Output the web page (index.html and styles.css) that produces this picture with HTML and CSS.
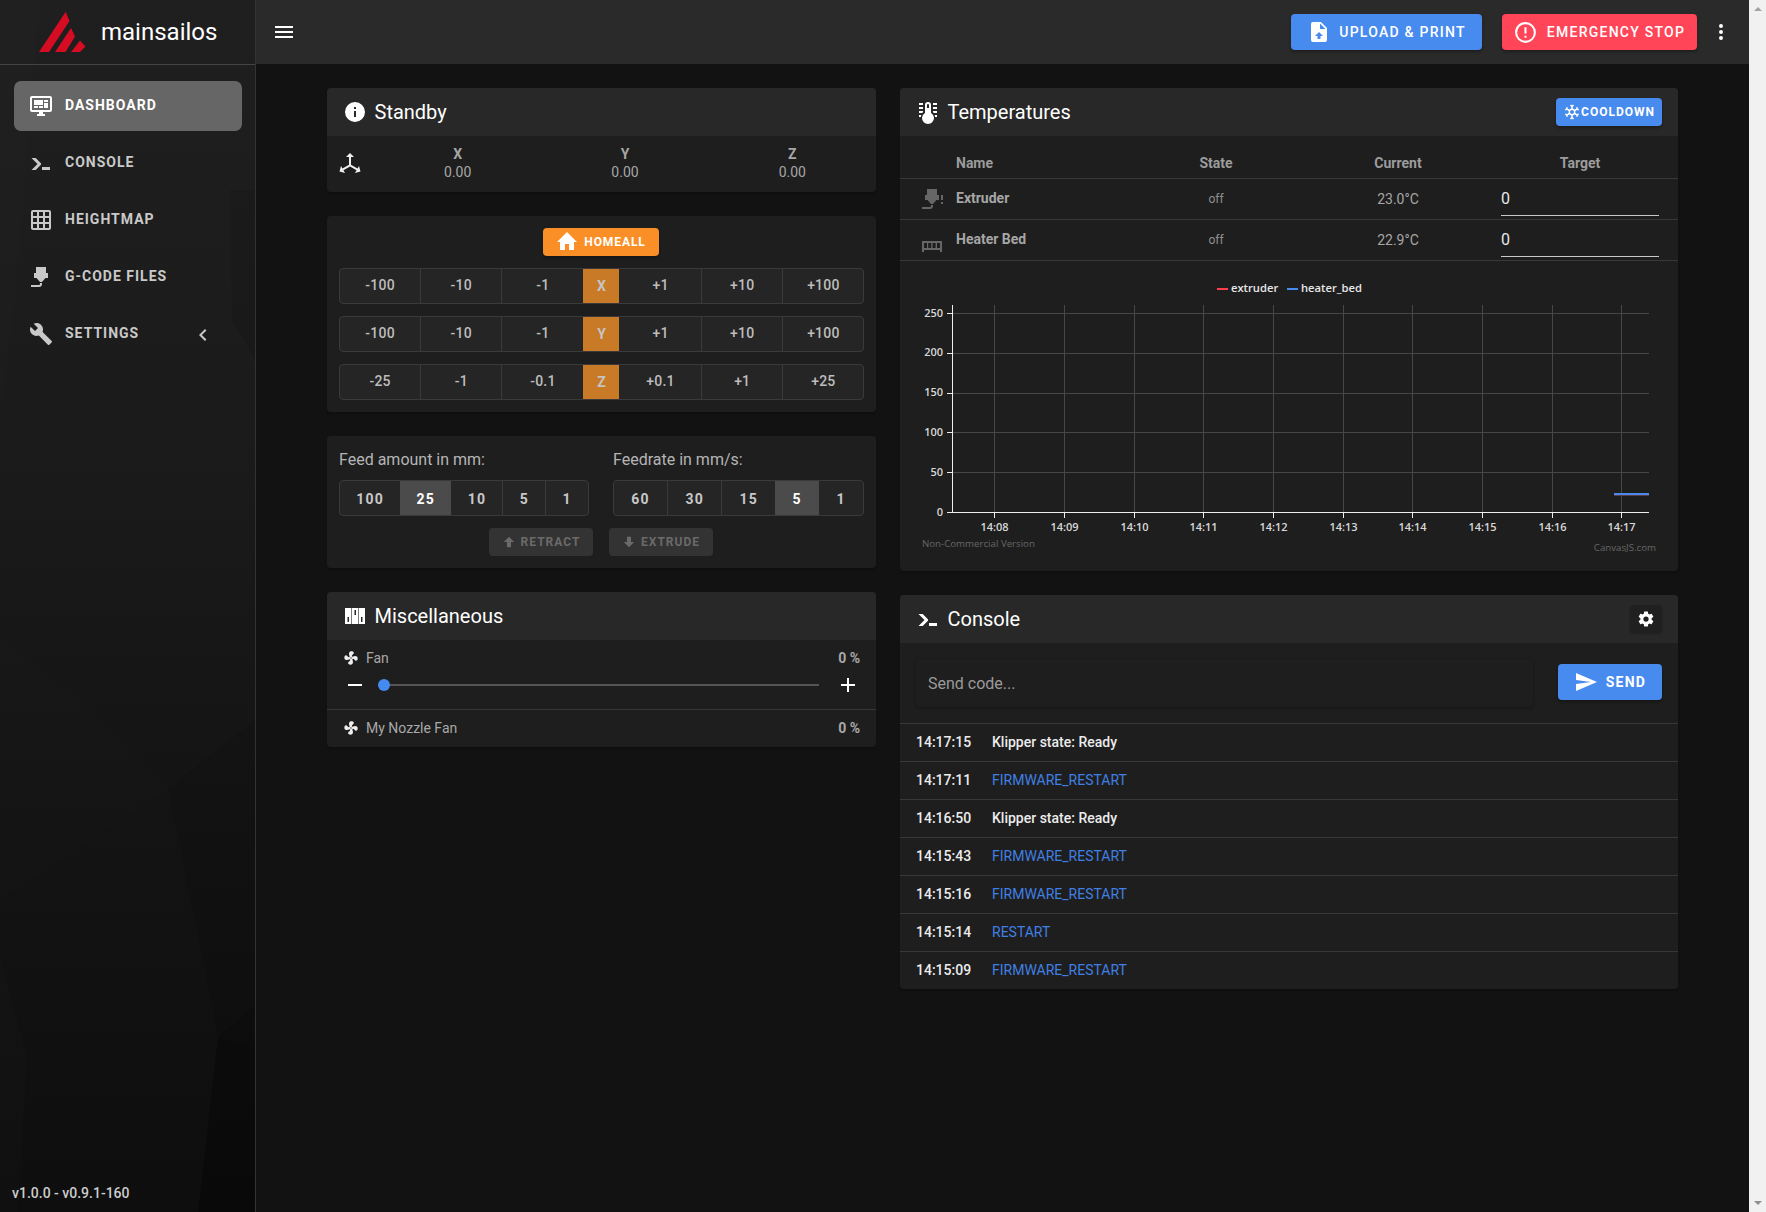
FILE: index.html
```html
<!DOCTYPE html>
<html lang="en">
<head>
<meta charset="utf-8">
<title>mainsailos</title>
<link rel="stylesheet" href="styles.css">
</head>
<body>
<svg class="sprite" aria-hidden="true">
  <symbol id="i-dash" viewBox="0 0 24 24"><path d="M21,16V4H3V16H21M21,2A2,2 0 0,1 23,4V16A2,2 0 0,1 21,18H14V20H16V22H8V20H10V18H3C1.89,18 1,17.1 1,16V4C1,2.89 1.89,2 3,2H21M5,6H14V11H5V6M15,6H19V8H15V6M19,9V14H15V9H19M5,12H9V14H5V12M10,12H14V14H10V12Z"/></symbol>
  <symbol id="i-console" viewBox="0 0 24 24"><path d="M13,19V16H21V19H13M8.5,13L2.47,7H6.71L11.67,11.95C12.25,12.54 12.25,13.5 11.67,14.07L6.74,19H2.5L8.5,13Z"/></symbol>
  <symbol id="i-grid" viewBox="0 0 24 24"><path d="M10,4V8H14V4H10M16,4V8H20V4H16M16,10V14H20V10H16M16,16V20H20V16H16M14,20V16H10V20H14M8,20V16H4V20H8M8,14V10H4V14H8M8,8V4H4V8H8M10,14H14V10H10V14M4,2H20A2,2 0 0,1 22,4V20A2,2 0 0,1 20,22H4C2.92,22 2,21.1 2,20V4A2,2 0 0,1 4,2Z"/></symbol>
  <symbol id="i-nozzle" viewBox="0 0 24 24"><path d="M7,2H17V8H19V13H16.5L13,17H11L7.5,13H5V8H7V2M10,22H2V20H10A1,1 0 0,0 11,19V18H13V19A3,3 0 0,1 10,22Z"/></symbol>
  <symbol id="i-nozzle-alert" viewBox="0 0 24 24"><path d="M7,2H17V8H19V13H16.5L13,17H11L7.5,13H5V8H7V2M10,22H2V20H10A1,1 0 0,0 11,19V18H13V19A3,3 0 0,1 10,22Z"/><path d="M21,8H23V13H21V8M21,15H23V17H21V15Z"/></symbol>
  <symbol id="i-wrench" viewBox="0 0 24 24"><path d="M22.7,19L13.6,9.9C14.5,7.6 14,4.9 12.1,3C10.1,1 7.1,0.6 4.7,1.7L9,6L6,9L1.6,4.7C0.4,7.1 0.9,10.1 2.9,12.1C4.8,14 7.5,14.5 9.8,13.6L18.9,22.7C19.3,23.1 19.9,23.1 20.3,22.7L22.6,20.4C23.1,20 23.1,19.3 22.7,19Z"/></symbol>
  <symbol id="i-chev" viewBox="0 0 24 24"><path d="M15.41,16.58L10.83,12L15.41,7.41L14,6L8,12L14,18L15.41,16.58Z"/></symbol>
  <symbol id="i-menu" viewBox="0 0 24 24"><path d="M3,6H21V8H3V6M3,11H21V13H3V11M3,16H21V18H3V16Z"/></symbol>
  <symbol id="i-upload" viewBox="0 0 24 24"><path d="M14,2H6A2,2 0 0,0 4,4V20A2,2 0 0,0 6,22H18A2,2 0 0,0 20,20V8L14,2M13.5,16V19H10.5V16H8L12.01,12L16,16H13.5M13,9V3.5L18.5,9H13Z"/></symbol>
  <symbol id="i-alert" viewBox="0 0 24 24"><path d="M11,15H13V17H11V15M11,7H13V13H11V7M12,2C6.47,2 2,6.5 2,12A10,10 0 0,0 12,22A10,10 0 0,0 22,12A10,10 0 0,0 12,2M12,20A8,8 0 0,1 4,12A8,8 0 0,1 12,4A8,8 0 0,1 20,12A8,8 0 0,1 12,20Z"/></symbol>
  <symbol id="i-dots" viewBox="0 0 24 24"><path d="M12,16A2,2 0 0,1 14,18A2,2 0 0,1 12,20A2,2 0 0,1 10,18A2,2 0 0,1 12,16M12,10A2,2 0 0,1 14,12A2,2 0 0,1 12,14A2,2 0 0,1 10,12A2,2 0 0,1 12,10M12,4A2,2 0 0,1 14,6A2,2 0 0,1 12,8A2,2 0 0,1 10,6A2,2 0 0,1 12,4Z"/></symbol>
  <symbol id="i-info" viewBox="0 0 24 24"><path d="M13,9H11V7H13M13,17H11V11H13M12,2A10,10 0 0,0 2,12A10,10 0 0,0 12,22A10,10 0 0,0 22,12A10,10 0 0,0 12,2Z"/></symbol>
  <symbol id="i-axis" viewBox="0 0 24 24"><path d="M12,2L16,6H13V13.85L19.53,17.61L21,15.03L22.5,20.5L17,21.96L18.53,19.35L12,15.58L5.47,19.35L7,21.96L1.5,20.5L3,15.03L4.47,17.61L11,13.85V6H8L12,2Z"/></symbol>
  <symbol id="i-home" viewBox="0 0 24 24"><path d="M10,20V14H14V20H19V12H22L12,2L2,12H5V20H10Z"/></symbol>
  <symbol id="i-up" viewBox="0 0 24 24"><path d="M15,20H9V12H4.16L12,4.16L19.84,12H15V20Z"/></symbol>
  <symbol id="i-down" viewBox="0 0 24 24"><path d="M9,4H15V12H19.84L12,19.84L4.16,12H9V4Z"/></symbol>
  <symbol id="i-dip" viewBox="0 0 24 24"><path fill-rule="evenodd" d="M2 4h6.4v16H2zM4.5 13v5H6v-5zM9 4h6v16H9zM11.5 6v5H13V6zM15.6 4H22v16h-6.4zM18 13v5h1.5v-5z"/></symbol>
  <symbol id="i-fan" viewBox="0 0 24 24"><path d="M12,11A1,1 0 0,0 11,12A1,1 0 0,0 12,13A1,1 0 0,0 13,12A1,1 0 0,0 12,11M12.5,2C17,2 17.11,5.57 14.75,6.75C13.76,7.24 13.32,8.29 13.13,9.22C13.61,9.42 14.03,9.73 14.35,10.13C18.05,8.13 22.03,8.92 22.03,12.5C22.03,17 18.46,17.1 17.28,14.73C16.78,13.74 15.72,13.3 14.79,13.11C14.59,13.59 14.28,14 13.88,14.34C15.87,18.03 15.08,22 11.5,22C7,22 6.91,18.42 9.27,17.24C10.25,16.75 10.69,15.71 10.89,14.79C10.4,14.59 9.97,14.27 9.65,13.87C5.96,15.85 2,15.07 2,11.5C2,7 5.56,6.89 6.74,9.26C7.24,10.25 8.29,10.68 9.22,10.87C9.41,10.39 9.73,9.97 10.14,9.65C8.15,5.96 8.94,2 12.5,2Z"/></symbol>
  <symbol id="i-thermo" viewBox="0 0 24 24"><path d="M17,3H21V5H17V3M17,7H21V9H17V7M17,11H21V13H17.75L17,12.1V11M21,15V17H19C19,16.31 18.9,15.63 18.71,15H21M7,3V5H3V3H7M7,7V9H3V7H7M7,11V12.1L6.25,13H3V11H7M3,15H5.29C5.1,15.63 5,16.31 5,17H3V15M15,13V5A3,3 0 0,0 12,2A3,3 0 0,0 9,5V13A6,6 0 0,0 6,18A6,6 0 0,0 12,24A6,6 0 0,0 18,18C18,16.17 16.79,14.33 15,13M12,4A1,1 0 0,1 13,5V8H11V5A1,1 0 0,1 12,4Z"/></symbol>
  <symbol id="i-bed" viewBox="0 0 24 24"><path fill-rule="evenodd" d="M2 8h20v11h-2v-2H4v2H2zM4 10v5h3v-5zM8.2 10v5h3v-5zM12.6 10v5h3v-5zM17 10v5h3v-5z"/></symbol>
  <symbol id="i-snow" viewBox="0 0 24 24"><path d="M20.79,13.95L18.46,14.57L16.46,13.44V10.56L18.46,9.43L20.79,10.05L21.31,8.12L19.54,7.65L20,5.88L18.07,5.36L17.45,7.69L15.45,8.82L13,7.38V5.12L14.71,3.41L13.29,2L12,3.29L10.71,2L9.29,3.41L11,5.12V7.38L8.5,8.82L6.5,7.69L5.92,5.36L4,5.88L4.47,7.65L2.7,8.12L3.22,10.05L5.55,9.43L7.55,10.56V13.45L5.55,14.58L3.22,13.96L2.7,15.89L4.47,16.36L4,18.12L5.93,18.64L6.55,16.31L8.55,15.18L11,16.62V18.88L9.29,20.59L10.71,22L12,20.71L13.29,22L14.7,20.59L13,18.88V16.62L15.5,15.17L17.5,16.3L18.12,18.63L20,18.12L19.53,16.35L21.3,15.88L20.79,13.95M9.5,10.56L12,9.11L14.5,10.56V13.44L12,14.89L9.5,13.44V10.56Z"/></symbol>
  <symbol id="i-cog" viewBox="0 0 24 24"><path d="M12,15.5A3.5,3.5 0 0,1 8.5,12A3.5,3.5 0 0,1 12,8.5A3.5,3.5 0 0,1 15.5,12A3.5,3.5 0 0,1 12,15.5M19.43,12.97C19.47,12.65 19.5,12.33 19.5,12C19.5,11.67 19.47,11.34 19.43,11L21.54,9.37C21.73,9.22 21.78,8.95 21.66,8.73L19.66,5.27C19.54,5.05 19.27,4.96 19.05,5.05L16.56,6.05C16.04,5.66 15.5,5.32 14.87,5.07L14.5,2.42C14.46,2.18 14.25,2 14,2H10C9.75,2 9.54,2.18 9.5,2.42L9.13,5.07C8.5,5.32 7.96,5.66 7.44,6.05L4.95,5.05C4.73,4.96 4.46,5.05 4.34,5.27L2.34,8.73C2.21,8.95 2.27,9.22 2.46,9.37L4.57,11C4.53,11.34 4.5,11.67 4.5,12C4.5,12.33 4.53,12.65 4.57,12.97L2.46,14.63C2.27,14.78 2.21,15.05 2.34,15.27L4.34,18.73C4.46,18.95 4.73,19.03 4.95,18.95L7.44,17.94C7.96,18.34 8.5,18.68 9.13,18.93L9.5,21.58C9.54,21.82 9.75,22 10,22H14C14.25,22 14.46,21.82 14.5,21.58L14.87,18.93C15.5,18.67 16.04,18.34 16.56,17.94L19.05,18.95C19.27,19.03 19.54,18.95 19.66,18.73L21.66,15.27C21.78,15.05 21.73,14.78 21.54,14.63L19.43,12.97Z"/></symbol>
  <symbol id="i-send" viewBox="0 0 24 24"><path d="M2,21L23,12L2,3V10L17,12L2,14V21Z"/></symbol>
  <symbol id="i-minus" viewBox="0 0 24 24"><path d="M19,13H5V11H19V13Z"/></symbol>
  <symbol id="i-plus" viewBox="0 0 24 24"><path d="M19,13H13V19H11V13H5V11H11V5H13V11H19V13Z"/></symbol>
</svg>

<div class="app">
  <aside class="sidebar">
    <svg class="side-bg" viewBox="0 0 255 1212" preserveAspectRatio="none" aria-hidden="true">
      <polygon points="0,0 40,0 15,300 0,420" fill="#fff" opacity="0.008"/>
      <polygon points="255,190 230,190 232,320 255,360" fill="#000" opacity="0.08"/>
      <polygon points="0,900 168,788 80,700 0,640" fill="#fff" opacity="0.008"/>
      <polygon points="255,720 168,788 218,1037 255,1005" fill="#000" opacity="0.08"/>
      <polygon points="218,1037 255,1005 255,1050" fill="#000" opacity="0.2"/>
      <polygon points="218,1037 255,1050 255,1212 198,1212" fill="#000" opacity="0.3"/>
      <polygon points="0,955 27,1058 18,1212 0,1212" fill="#fff" opacity="0.01"/>
    </svg>
    <div class="brand">
      <svg class="brand-logo" viewBox="0 0 47 41" aria-hidden="true">
        <polygon points="0,41 26.7,0.7 30.5,10 10,41"/>
        <polygon points="16,41 32,17 36,25.5 26.5,41"/>
        <polygon points="32,41 41,29.5 46.5,35.5 41,41"/>
      </svg>
      <span class="brand-name">mainsailos</span>
    </div>
    <nav class="nav">
      <a class="nav-item nav-active"><svg class="ico"><use href="#i-dash"/></svg><span>Dashboard</span></a>
      <a class="nav-item"><svg class="ico"><use href="#i-console"/></svg><span>Console</span></a>
      <a class="nav-item"><svg class="ico"><use href="#i-grid"/></svg><span>Heightmap</span></a>
      <a class="nav-item"><svg class="ico"><use href="#i-nozzle"/></svg><span>G-Code Files</span></a>
      <a class="nav-item"><svg class="ico"><use href="#i-wrench"/></svg><span class="nav-grow">Settings</span><svg class="ico nav-chev"><use href="#i-chev"/></svg></a>
    </nav>
    <div class="version">v1.0.0 - v0.9.1-160</div>
  </aside>

  <div class="main">
    <header class="topbar">
      <svg class="ico top-menu"><use href="#i-menu"/></svg>
      <div class="top-space"></div>
      <a class="btn btn-top btn-blue btn-upload"><svg class="ico"><use href="#i-upload"/></svg><span>Upload &amp; Print</span></a>
      <a class="btn btn-top btn-red btn-stop"><svg class="ico"><use href="#i-alert"/></svg><span>Emergency Stop</span></a>
      <svg class="ico top-dots"><use href="#i-dots"/></svg>
    </header>

    <main class="content">
      <div class="column">
        <section class="card">
          <div class="card-head"><svg class="ico"><use href="#i-info"/></svg><h2>Standby</h2></div>
          <div class="pos">
            <svg class="ico pos-icon"><use href="#i-axis"/></svg>
            <div class="pos-col"><strong>X</strong><span>0.00</span></div>
            <div class="pos-col"><strong>Y</strong><span>0.00</span></div>
            <div class="pos-col"><strong>Z</strong><span>0.00</span></div>
          </div>
        </section>

        <section class="card jog">
          <div class="jog-home"><a class="btn btn-orange btn-home"><svg class="ico"><use href="#i-home"/></svg><span>Homeall</span></a></div>
          <div class="jog-row"><a class="jog-cell">-100</a><a class="jog-cell">-10</a><a class="jog-cell">-1</a><a class="jog-axis">X</a><a class="jog-cell">+1</a><a class="jog-cell">+10</a><a class="jog-cell">+100</a></div>
          <div class="jog-row"><a class="jog-cell">-100</a><a class="jog-cell">-10</a><a class="jog-cell">-1</a><a class="jog-axis">Y</a><a class="jog-cell">+1</a><a class="jog-cell">+10</a><a class="jog-cell">+100</a></div>
          <div class="jog-row"><a class="jog-cell">-25</a><a class="jog-cell">-1</a><a class="jog-cell">-0.1</a><a class="jog-axis">Z</a><a class="jog-cell">+0.1</a><a class="jog-cell">+1</a><a class="jog-cell">+25</a></div>
        </section>

        <section class="card feed">
          <div class="feed-grid">
            <div>
              <div class="feed-label">Feed amount in mm:</div>
              <div class="seg"><a>100</a><a class="seg-on">25</a><a>10</a><a>5</a><a>1</a></div>
            </div>
            <div>
              <div class="feed-label">Feedrate in mm/s:</div>
              <div class="seg"><a>60</a><a>30</a><a>15</a><a class="seg-on">5</a><a>1</a></div>
            </div>
          </div>
          <div class="feed-actions">
            <a class="btn btn-off"><svg class="ico"><use href="#i-up"/></svg><span>Retract</span></a>
            <a class="btn btn-off"><svg class="ico"><use href="#i-down"/></svg><span>Extrude</span></a>
          </div>
        </section>

        <section class="card">
          <div class="card-head"><svg class="ico"><use href="#i-dip"/></svg><h2>Miscellaneous</h2></div>
          <div class="fan fan-slider">
            <div class="fan-line"><svg class="ico"><use href="#i-fan"/></svg><span class="fan-name">Fan</span><span class="fan-val">0 %</span></div>
            <div class="slider-line">
              <svg class="ico"><use href="#i-minus"/></svg>
              <div class="slider"><span class="slider-thumb"></span></div>
              <svg class="ico"><use href="#i-plus"/></svg>
            </div>
          </div>
          <div class="fan fan-plain">
            <div class="fan-line"><svg class="ico"><use href="#i-fan"/></svg><span class="fan-name">My Nozzle Fan</span><span class="fan-val">0 %</span></div>
          </div>
        </section>
      </div>

      <div class="column">
        <section class="card">
          <div class="card-head"><svg class="ico"><use href="#i-thermo"/></svg><h2>Temperatures</h2>
            <a class="btn btn-blue btn-cool"><svg class="ico"><use href="#i-snow"/></svg><span>Cooldown</span></a>
          </div>
          <div class="temp-row temp-top">
            <span></span><span class="temp-name">Name</span><span class="temp-c">State</span><span class="temp-c">Current</span><span class="temp-c">Target</span>
          </div>
          <div class="temp-row">
            <svg class="ico temp-ico"><use href="#i-nozzle-alert"/></svg><span class="temp-name">Extruder</span><span class="temp-c temp-state">off</span><span class="temp-c temp-cur">23.0°C</span><span class="temp-input">0</span>
          </div>
          <div class="temp-row">
            <svg class="ico temp-ico temp-ico-bed"><use href="#i-bed"/></svg><span class="temp-name">Heater Bed</span><span class="temp-c temp-state">off</span><span class="temp-c temp-cur">22.9°C</span><span class="temp-input">0</span>
          </div>
          <svg class="chart" viewBox="0 0 778 310" width="778" height="310" role="img" aria-label="Temperature chart">
            <g class="c-grid">
              <line x1="52" x2="749" y1="52.5" y2="52.5"/><line x1="52" x2="749" y1="92.5" y2="92.5"/><line x1="52" x2="749" y1="132.5" y2="132.5"/><line x1="52" x2="749" y1="171.5" y2="171.5"/><line x1="52" x2="749" y1="211.5" y2="211.5"/>
              <line x1="94.5" x2="94.5" y1="44" y2="251"/><line x1="164.5" x2="164.5" y1="44" y2="251"/><line x1="234.5" x2="234.5" y1="44" y2="251"/><line x1="303.5" x2="303.5" y1="44" y2="251"/><line x1="373.5" x2="373.5" y1="44" y2="251"/><line x1="443.5" x2="443.5" y1="44" y2="251"/><line x1="512.5" x2="512.5" y1="44" y2="251"/><line x1="582.5" x2="582.5" y1="44" y2="251"/><line x1="652.5" x2="652.5" y1="44" y2="251"/><line x1="721.5" x2="721.5" y1="44" y2="251"/>
            </g>
            <g class="c-axis">
              <line x1="52.5" x2="52.5" y1="44" y2="252"/><line x1="47" x2="749" y1="251.5" y2="251.5"/>
              <line x1="47" x2="52" y1="52.5" y2="52.5"/><line x1="47" x2="52" y1="92.5" y2="92.5"/><line x1="47" x2="52" y1="132.5" y2="132.5"/><line x1="47" x2="52" y1="171.5" y2="171.5"/><line x1="47" x2="52" y1="211.5" y2="211.5"/>
              <line x1="94.5" x2="94.5" y1="251" y2="257"/><line x1="164.5" x2="164.5" y1="251" y2="257"/><line x1="234.5" x2="234.5" y1="251" y2="257"/><line x1="303.5" x2="303.5" y1="251" y2="257"/><line x1="373.5" x2="373.5" y1="251" y2="257"/><line x1="443.5" x2="443.5" y1="251" y2="257"/><line x1="512.5" x2="512.5" y1="251" y2="257"/><line x1="582.5" x2="582.5" y1="251" y2="257"/><line x1="652.5" x2="652.5" y1="251" y2="257"/><line x1="721.5" x2="721.5" y1="251" y2="257"/>
            </g>
            <g class="c-y">
              <text x="43" y="56">250</text><text x="43" y="95">200</text><text x="43" y="135">150</text><text x="43" y="175">100</text><text x="43" y="215">50</text><text x="43" y="255">0</text>
            </g>
            <g class="c-x">
              <text x="94.5" y="270">14:08</text><text x="164.5" y="270">14:09</text><text x="234.5" y="270">14:10</text><text x="303.5" y="270">14:11</text><text x="373.5" y="270">14:12</text><text x="443.5" y="270">14:13</text><text x="512.5" y="270">14:14</text><text x="582.5" y="270">14:15</text><text x="652.5" y="270">14:16</text><text x="721.5" y="270">14:17</text>
            </g>
            <line class="c-red" x1="317" x2="328" y1="28" y2="28"/>
            <text class="c-leg" x="331" y="31">extruder</text>
            <line class="c-blue" x1="387" x2="398" y1="28" y2="28"/>
            <text class="c-leg" x="401" y="31">heater_bed</text>
            <line class="c-under" x1="714" x2="749" y1="234.5" y2="234.5"/>
            <line class="c-blue" x1="714" x2="749" y1="233" y2="233"/>
            <text class="c-credit" x="22" y="286">Non-Commercial Version</text>
            <text class="c-credit c-credit-end" x="756" y="290">CanvasJS.com</text>
          </svg>
        </section>

        <section class="card">
          <div class="card-head"><svg class="ico"><use href="#i-console"/></svg><h2>Console</h2>
            <a class="btn btn-gear"><svg class="ico"><use href="#i-cog"/></svg></a>
          </div>
          <div class="send-row">
            <div class="send-input">Send code...</div>
            <a class="btn btn-blue btn-send"><svg class="ico"><use href="#i-send"/></svg><span>Send</span></a>
          </div>
          <div class="log"><span class="log-time">14:17:15</span><span class="log-msg">Klipper state: Ready</span></div>
          <div class="log"><span class="log-time">14:17:11</span><span class="log-cmd">FIRMWARE_RESTART</span></div>
          <div class="log"><span class="log-time">14:16:50</span><span class="log-msg">Klipper state: Ready</span></div>
          <div class="log"><span class="log-time">14:15:43</span><span class="log-cmd">FIRMWARE_RESTART</span></div>
          <div class="log"><span class="log-time">14:15:16</span><span class="log-cmd">FIRMWARE_RESTART</span></div>
          <div class="log"><span class="log-time">14:15:14</span><span class="log-cmd">RESTART</span></div>
          <div class="log"><span class="log-time">14:15:09</span><span class="log-cmd">FIRMWARE_RESTART</span></div>
        </section>
      </div>
    </main>
  </div>

  <div class="scrollbar"><span class="arrow-up"></span><span class="arrow-down"></span></div>
</div>
</body>
</html>
```
FILE: styles.css
```css
* { box-sizing: border-box; }
html, body { margin: 0; height: 100%; overflow: hidden; }
body { background: #121212; color: #fff; font-family: Roboto, "Liberation Sans", sans-serif; font-size: 14px; }
h2 { margin: 0; font-size: 20px; font-weight: 400; line-height: 24px; }
a { color: inherit; text-decoration: none; }

.sprite { display: none; }
.ico { width: 24px; height: 24px; fill: currentColor; flex: none; display: block; }

.app { display: flex; height: 1212px; }

/* sidebar */
.sidebar { position: relative; width: 256px; flex: none; display: flex; flex-direction: column; border-right: 1px solid #333; background: linear-gradient(180deg, #1f1f1f 0%, #1b1b1b 35%, #131313 70%, #0e0e0e 100%); }
.side-bg { position: absolute; left: 0; top: 0; width: 255px; height: 1212px; }
.brand { position: relative; height: 65px; flex: none; border-bottom: 1px solid #444; display: flex; align-items: center; padding-left: 39px; }
.brand-logo { width: 47px; height: 41px; fill: #d50c22; margin-top: -1px; }
.brand-name { margin-left: 15px; font-size: 24px; line-height: 30px; color: #fff; }
.nav { position: relative; display: flex; flex-direction: column; gap: 7px; padding: 16px 13px 0 14px; }
.nav-item { height: 50px; border-radius: 7px; display: flex; align-items: center; padding-left: 15px; gap: 12px; color: #c9c9c9; font-size: 14px; font-weight: 700; letter-spacing: 1px; text-transform: uppercase; }
.nav-item span { margin-top: -2px; }
.nav-active { background: #666; color: #fff; }
.nav-grow { flex: 1; }
.nav-chev { margin-right: 27px; margin-top: 2px; }
.version { position: relative; margin-top: auto; padding: 0 0 9px 12px; line-height: 20px; font-weight: 500; color: #ccc; }

/* topbar */
.main { flex: 1; min-width: 0; display: flex; flex-direction: column; }
.topbar { height: 64px; flex: none; background: #2a2a2a; display: flex; align-items: center; padding: 0 16px; }
.top-space { flex: 1; }
.btn { display: inline-flex; align-items: center; justify-content: center; border-radius: 4px; text-transform: uppercase; font-weight: 500; box-shadow: 0 2px 3px rgba(0,0,0,.3); }
.btn-blue { background: #488bef; color: #fff; }
.btn-red { background: #ff4557; color: #fff; }
.btn-orange { background: #fb8f27; color: #fff; }
.btn-top { height: 36px; letter-spacing: 1.25px; font-size: 14px; }
.btn-upload { width: 191px; gap: 8px; margin-right: 20px; }
.btn-stop { width: 195px; gap: 9px; margin-right: 12px; }
.btn-stop .ico { width: 25px; height: 25px; margin-left: -1px; }

/* content */
.content { flex: 1; display: grid; grid-template-columns: 549px 778px; justify-content: center; align-content: start; gap: 24px; padding-top: 24px; }
.column { display: flex; flex-direction: column; gap: 24px; min-width: 0; }
.card { background: #1e1e1e; border-radius: 4px; box-shadow: 0 2px 2px rgba(0,0,0,.2); overflow: hidden; }
.card-head { height: 48px; background: #282828; display: flex; align-items: center; padding: 0 16px 0 15.5px; gap: 8px; }
.card-head h2 { flex: 1; }

.pos { display: grid; grid-template-columns: 36px repeat(3, 1fr); align-items: center; padding: 9px 0 11px 11px; }
.pos-icon { color: #eee; }
.pos-col { display: flex; flex-direction: column; align-items: center; line-height: 18px; color: #a6a6a6; }
.pos-col strong { font-weight: 700; }

.jog { padding: 12px; display: flex; flex-direction: column; gap: 12px; }
.jog-home { display: flex; justify-content: center; padding-right: 2px; }
.btn-home { height: 28px; width: 116px; gap: 5px; font-size: 12px; font-weight: 700; letter-spacing: .9px; }
.jog-row { height: 36px; display: flex; border: 1px solid #3a3a3a; border-radius: 4px; background: #252525; overflow: hidden; }
.jog-cell { flex: 0 0 calc((100% - 36px) / 6); display: flex; align-items: center; justify-content: center; color: #bdbdbd; padding-bottom: 2px; font-size: 14px; font-weight: 500; letter-spacing: .2px; }
.jog-cell:nth-child(-n+2) { border-right: 1px solid #3a3a3a; }
.jog-cell:nth-child(n+5) { padding-left: 1px; }
.jog-cell:nth-child(n+6) { border-left: 1px solid #3a3a3a; }
.jog-axis { flex: none; width: 36px; margin: -1px 0; background: #c87a26; color: #c4c4c4; font-weight: 700; display: flex; align-items: center; justify-content: center; }

.feed { padding: 12px; }
.feed-grid { display: grid; grid-template-columns: 250px 251px; gap: 24px; }
.feed-label { font-size: 16px; line-height: 20px; color: #b5b5b5; margin: 2px 0 10px; }
.seg { height: 36px; display: flex; border: 1px solid #3a3a3a; border-radius: 4px; background: #252525; overflow: hidden; }
.seg a { flex: auto; padding: 1px 16px 0; display: flex; align-items: center; justify-content: center; font-weight: 700; letter-spacing: 1.25px; color: #c8c8c8; border-left: 1px solid #3a3a3a; }
.seg a:first-child { border-left: 0; }
.seg .seg-on { background: #4b4b4b; color: #fff; border-left: 0; }
.seg .seg-on + a { border-left: 0; }
.feed-actions { display: flex; justify-content: center; gap: 16px; margin-top: 12px; padding-right: 2px; }
.btn-off { width: 104px; height: 28px; background: #333; color: #6a6a6a; font-size: 12px; font-weight: 700; letter-spacing: 1px; box-shadow: none; gap: 4px; }
.btn-off .ico { width: 16px; height: 16px; }

.fan { padding: 0 16px; }
.fan-slider { padding-top: 8px; padding-bottom: 12px; border-bottom: 1px solid #363636; }
.fan-plain { height: 37px; display: flex; align-items: center; padding-bottom: 1px; }
.fan-plain .fan-line { flex: 1; }
.fan-line { display: flex; align-items: center; gap: 7px; line-height: 20px; color: #a8a8a8; }
.fan-line .ico { width: 16px; height: 16px; color: #eee; }
.fan-name { flex: 1; }
.fan-val { font-weight: 700; }
.slider-line { display: flex; align-items: center; margin-top: 5px; }
.slider { position: relative; flex: 1; height: 2px; background: #555; margin: 0 17px 0 11px; }
.slider-thumb { position: absolute; left: 0; top: -5px; width: 12px; height: 12px; border-radius: 50%; background: #448aef; }

/* temperatures */
.btn-cool { width: 106px; height: 28px; gap: 0; font-size: 12px; font-weight: 700; letter-spacing: 1px; flex: none; }
.btn-cool .ico { width: 18px; height: 18px; }
.temp-row { height: 41px; display: grid; grid-template-columns: 56px 162px 196px 168px 196px; align-items: center; border-bottom: 1px solid #383838; }
.temp-top { height: 43px; color: #a0a0a0; font-weight: 700; }
.temp-name { font-weight: 700; color: #a6a6a6; margin-top: -2px; }
.temp-top .temp-name, .temp-top .temp-c { margin-top: 11px; color: #9c9c9c; }
.temp-c { text-align: center; }
.temp-state { font-size: 12px; color: #8f8f8f; }
.temp-cur { color: #a6a6a6; }
.temp-ico { color: #666; margin-left: 20px; }
.temp-ico-bed { margin-top: 10px; }
.temp-input { margin: 1px 19px 0; height: 36px; align-self: start; border-bottom: 1px solid #c8c8c8; font-size: 16px; line-height: 38px; color: #e8e8e8; }

.chart { display: block; }
.c-grid line { stroke: #474747; stroke-width: 1; }
.c-axis line { stroke: #eee; stroke-width: 1; }
.c-y text, .c-x text, .c-leg, .c-credit { font-family: "Open Sans", "DejaVu Sans", sans-serif; }
.c-y text { font-size: 11px; font-weight: 600; fill: #d8d8d8; text-anchor: end; }
.c-x text { font-size: 11px; font-weight: 600; fill: #d8d8d8; text-anchor: middle; }
.c-leg { font-size: 11.2px; font-weight: 600; fill: #e8e8e8; }
.c-credit { font-size: 9.7px; fill: #666; }
.c-credit-end { text-anchor: end; }
.c-red { stroke: #ff3d4f; stroke-width: 2; }
.c-blue { stroke: #488bef; stroke-width: 2; }
.c-under { stroke: #5d3a44; stroke-width: 1; }

/* console */
.btn-gear { width: 32px; height: 28px; background: #202020; color: #fff; flex: none; box-shadow: 0 1px 2px rgba(0,0,0,.2); }
.btn-gear .ico { width: 18px; height: 18px; }
.send-row { height: 80px; display: flex; align-items: center; padding: 0 16px; gap: 25px; }
.send-input { flex: 1; height: 48px; background: #1e1e1e; box-shadow: 0 1px 3px rgba(0,0,0,.35); border-radius: 4px; padding-left: 12px; font-size: 16px; line-height: 50px; color: #9a9a9a; }
.btn-send { width: 104px; height: 36px; gap: 8px; font-size: 14px; font-weight: 700; letter-spacing: 1.25px; flex: none; margin-top: -2px; }
.log { height: 38px; display: flex; align-items: center; padding: 0 0 1px 16px; border-top: 1px solid #383838; color: #ececec; }
.log-time { width: 76px; flex: none; font-weight: 500; }
.log-msg { font-weight: 500; }
.log-cmd { color: #4080e4; }

/* scrollbar */
.scrollbar { width: 17px; flex: none; background: #f1f1f1; display: flex; flex-direction: column; justify-content: space-between; align-items: center; padding: 7px 0 7px; }
.arrow-up, .arrow-down { width: 0; height: 0; border-left: 4px solid transparent; border-right: 4px solid transparent; }
.arrow-up { border-bottom: 4px solid #a3a3a3; }
.arrow-down { border-top: 4px solid #8f8f8f; }
```
